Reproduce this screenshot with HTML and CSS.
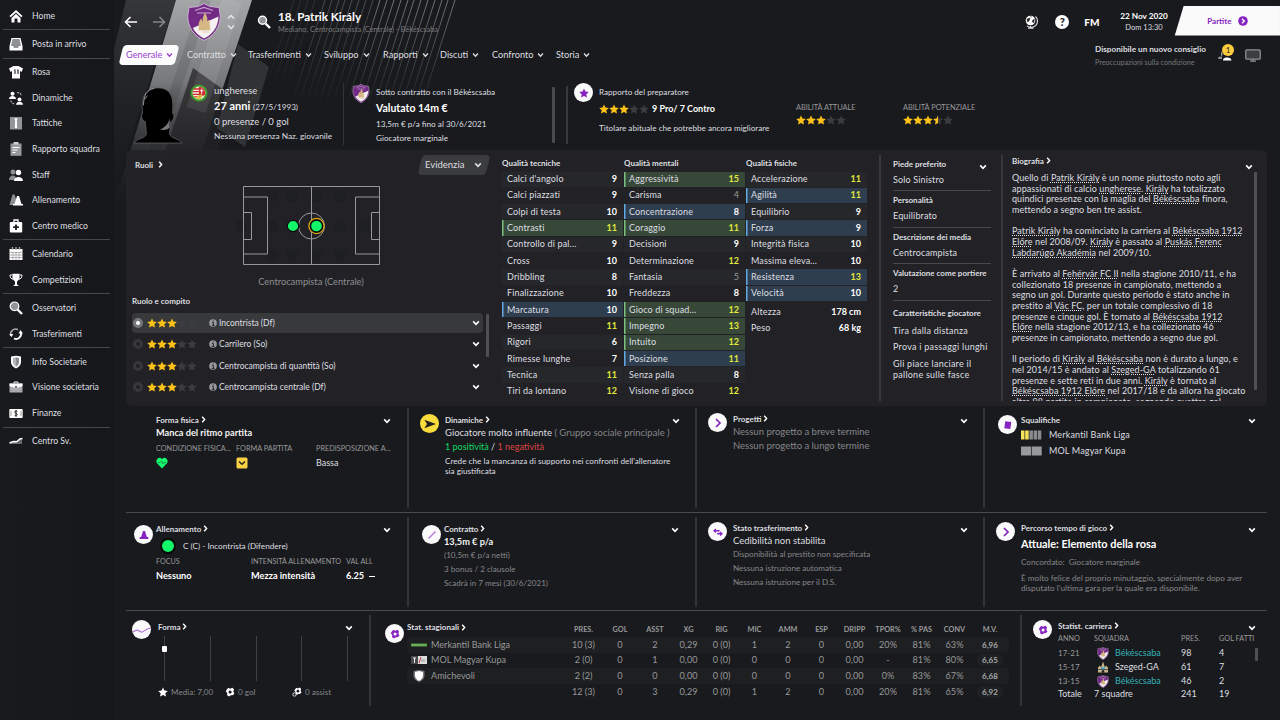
FILE: index.html
```html
<!DOCTYPE html>
<html lang="it">
<head>
    <meta charset="utf-8">
    <title>Patrik Király</title>
    <link rel="stylesheet" href="styles.css">
</head>
<body>
<svg class="defs" width="0" height="0">
    <defs>
        <linearGradient id="band" x1="0" y1="0" x2="0" y2="1"><stop offset="0" stop-color="#a5a6a8"/><stop offset=".4" stop-color="#77787a"/><stop offset="1" stop-color="#222326" stop-opacity="0"/></linearGradient>
        <linearGradient id="dimband" x1="0" y1="0" x2="0" y2="1"><stop offset="0" stop-color="#36373a"/><stop offset="1" stop-color="#222326" stop-opacity="0"/></linearGradient>
        <linearGradient id="ray" gradientUnits="userSpaceOnUse" x1="0" y1="0" x2="0" y2="110"><stop offset="0" stop-color="#77787a"/><stop offset="1" stop-color="#77787a" stop-opacity="0"/></linearGradient>
    </defs>
    <symbol id="chev" viewBox="0 0 8 6"><path d="M1.2 1.4 4 4.3 6.8 1.4" fill="none" stroke="currentColor" stroke-width="1.6"/></symbol>
    <symbol id="next" viewBox="0 0 5 8"><path d="M1 .9 3.8 4 1 7.1" fill="none" stroke="currentColor" stroke-width="1.6"/></symbol>
    <symbol id="star" viewBox="0 0 10 10"><path d="M5 .4 6.4 3.5 9.8 3.9 7.3 6.2 8 9.6 5 7.9 2 9.6 2.7 6.2.2 3.9 3.6 3.5z" fill="currentColor"/></symbol>
    <symbol id="stars3" viewBox="0 0 50 10">
        <g color="#fcc218"><use href="#star" width="10" height="10"/><use href="#star" x="10" width="10" height="10"/><use href="#star" x="20" width="10" height="10"/></g>
        <g color="#3b3c3f"><use href="#star" x="30" width="10" height="10"/><use href="#star" x="40" width="10" height="10"/></g>
    </symbol>
    <symbol id="stars35" viewBox="0 0 50 10">
        <use href="#stars3" width="50" height="10"/>
        <path d="M35 .4 33.6 3.5 30.2 3.9 32.7 6.2 32 9.6 35 7.9z" fill="#fcc218"/>
    </symbol>
    <symbol id="crest" viewBox="0 0 34 38">
        <path d="M17 .5 23 3.5 32 4.5 33.3 13C33.3 24 27 33 17 37.5 7 33 .7 24 .7 13L2 4.5 11 3.5z" fill="#722a85" stroke="#c9b3cf" stroke-width="1"/>
        <path d="M31.5 13.5C31 24 26 31 17 35.5 11.500 32.500 8 29 5.800 25z" fill="#f5f1f2"/>
        <path d="M8 7.500 17 4.500 26 7.500M10 10h14" stroke="#c7a5ce" fill="none" stroke-width="1.200"/>
        <path d="M12 27v-7l2-4 2 4v-5l2-5 2 5v5l2-3 1 10zM15 29h7" fill="#d6b884" stroke="#d6b884" stroke-width=".6"/>
    </symbol>
    <symbol id="ball" viewBox="0 0 12 12"><path d="M4 1 6 2 9 .8 10.800 3 10 5.500 11.300 8 9 10 6.800 9.800 5 11.300 2.500 10 2.700 7.300.9 5 2.400 2.700z" fill="currentColor"/><circle cx="6.100" cy="6" r="1.900" fill="var(--hole, #191a1d)"/></symbol>
    <symbol id="info" viewBox="0 0 10 10"><circle cx="5" cy="5" r="4.800" fill="#98999b"/><path d="M3.800 4.400H5.500V8M3.500 8h3.500M5.200 1.700v1.500" stroke="#242528" stroke-width="1.200" fill="none"/></symbol>
</svg>

<nav class="sidebar">
    <div class="group">
        <a><svg viewBox="0 0 14 14"><path d="M7 1 13.500 7 12.300 8.300 7 3.400 1.700 8.300.5 7zM7 4.700 11.500 9v4.500H8.500V9.500h-3v4h-3V9z" fill="#fff"/></svg>Home</a>
    </div>
    <div class="group">
        <a><svg viewBox="0 0 14 14"><path d="M2.500 1h9L13.500 9v4.500H.5V9z" fill="#fff"/><path d="M3.500 2h7L12 9H10L9 11H5L4 9H2z" fill="#8f9093"/></svg>Posta in arrivo</a>
    </div>
    <div class="group">
        <a><svg viewBox="0 0 14 14"><path d="M4.500 1h5L14 3.500 12.500 7 11 6v7.500H3V6L1.500 7 0 3.500z" fill="#fff"/><path d="M5 5h1v4M8 5h1v4" stroke="#333" stroke-width="1.200" fill="none"/></svg>Rosa</a>
        <a><svg viewBox="0 0 14 14"><circle cx="3.500" cy="2.800" r="2" fill="#fff"/><path d="M0 8c0-4 7-4 7 0z" fill="#fff"/><circle cx="10.500" cy="8.500" r="2" fill="#fff"/><path d="M7 13.700c0-4 7-4 7 0z" fill="#fff"/><path d="M8 1.500C11 1.500 12 3 12.300 5M1.800 9.500C2 11 3.500 13 6 13" fill="none" stroke="#aaa" stroke-width="1.200" stroke-dasharray="2 1"/></svg>Dinamiche</a>
        <a><svg viewBox="0 0 14 14"><path d="M1 1h12v12.500H1z" fill="#939496"/><circle cx="7" cy="3.500" r="1.400" fill="#fff"/><path d="M7 5v5" stroke="#fff" stroke-width="2"/><circle cx="7" cy="11" r="1.300" fill="#fff"/></svg>Tattiche</a>
        <a><svg viewBox="0 0 14 14"><path d="M1.500 1.500h11v12.300h-11z" fill="#98999b"/><path d="M4.500 0h5v2.500h-5z" fill="#ccc"/><path d="M3.500 5.500h7M3.500 8h5M3.500 10.500h3" stroke="#fff"/></svg>Rapporto squadra</a>
        <a><svg viewBox="0 0 14 14"><g fill="#8d8e90"><circle cx="4" cy="4" r="2.500"/><path d="M0 12c0-5 6-6 7-2v2z"/></g><circle cx="9.500" cy="4.500" r="2.700" fill="#fff"/><path d="M5 13c0-5.500 9-5.500 9 0z" fill="#fff"/></svg>Staff</a>
        <a><svg viewBox="0 0 14 14"><path d="M3.500 1.500h2L8 9v3H.5z" fill="#8d8e90"/><path d="M8 3h2l2.500 8H14v1.500H4V11h1.500z" fill="#fff"/></svg>Allenamento</a>
        <a><svg viewBox="0 0 14 14"><path d="M5 3V1h4v2" fill="none" stroke="#fff" stroke-width="1.300"/><rect x=".8" y="3" width="12.400" height="10.500" rx="1" fill="#fff"/><path d="M7 5.500v5.500M4.200 8.200h5.600" stroke="#191a1d" stroke-width="1.800"/></svg>Centro medico</a>
    </div>
    <div class="group">
        <a><svg viewBox="0 0 14 14"><path d="M.5 2h13v11H.5z" fill="#fff"/><path d="M3.500 0v3M7 0v3M10.500 0v3" stroke="#aaa" stroke-width="1.300"/><path d="M1 5.500h12M1 8h12M1 10.500h12M4 5v8M7 5v8M10 5v8" stroke="#999" stroke-width=".7"/></svg>Calendario</a>
        <a><svg viewBox="0 0 14 14"><path d="M3.500.8h7V6L8 8.500v3l2 1.500H4l2-1.500v-3L3.500 6z" fill="#fff"/><path d="M3.500 2H1c0 3 1.500 4 3 4M10.500 2H13c0 3-1.500 4-3 4" fill="none" stroke="#fff"/></svg>Competizioni</a>
    </div>
    <div class="group">
        <a><svg viewBox="0 0 14 14"><path d="m8.500 8.500 4.500 4.500" stroke="#fff" stroke-width="2.400"/><circle cx="5.500" cy="5.300" r="4.300" fill="#939496" stroke="#fff" stroke-width="1.200"/></svg>Osservatori</a>
        <a><svg viewBox="0 0 14 14"><path d="M2 9A5 5 0 0 1 9 2.700" fill="none" stroke="#aaa" stroke-width="1.600"/><path d="M5 11.500A5 5 0 0 0 12 6" fill="none" stroke="#fff" stroke-width="1.800"/><path d="M.3 7h4L2.500 10zM9.500 6.500h4.500L11.500 3z" fill="#fff"/></svg>Trasferimenti</a>
    </div>
    <div class="group">
        <a><svg viewBox="0 0 14 14"><path d="M2 1.500 7 .8l5 .7V7c0 3.500-3 5.500-5 6.500C5 12.500 2 10.500 2 7z" fill="#fff"/><path d="M7 2.300 10 3v4c0 2.500-1.800 4-3 4.800z" fill="#8d8e90"/><path d="M7 2.300 4 3v4c0 2.500 1.800 4 3 4.800z" fill="#b5b6b8"/></svg>Info Societarie</a>
        <a><svg viewBox="0 0 14 14"><path d="M5 3.500V2h4v1.500" fill="none" stroke="#fff"/><path d="M.5 3.500h13V12.500H.5z" fill="#a9aaac"/><path d="M.5 3.500h13V6L7 8.500.5 6z" fill="#fff"/><circle cx="7" cy="7" r="1.300" fill="#777"/></svg>Visione societaria</a>
        <a><svg viewBox="0 0 14 14"><rect x=".3" y="3" width="13.400" height="9" rx="1" fill="#fff"/><path d="M8.300 5.300c-3-1-3.300 1.500-1.300 2s1.500 3-1.300 2M7 4v7" stroke="#222" fill="none"/><path d="M2 5v5M12 5v5" stroke="#999"/></svg>Finanze</a>
    </div>
    <div class="group last">
        <a><svg viewBox="0 0 14 14"><path d="m1 9 4-1 3-1 5-2v5H1z" fill="#66676a"/><path d="m.5 9 4-1.500 3 .2L11 5l2.500-.5" stroke="#fff" fill="none" stroke-width="1.400"/></svg>Centro Sv.</a>
    </div>
</nav>

<main>
    <svg class="backdrop" width="480" height="230" viewBox="0 0 480 230">
        <path d="M12 0H62L0 190V50z" fill="url(#dimband)"/>
        <path d="M62 0H138L70 205H0z" fill="url(#band)"/>
        <path d="M79 68 121 98 78 230H25z" fill="#222326" opacity=".72"/>
        <path d="M124 44 155 67 131 147 103 128z" fill="#37383b" opacity=".8"/>
        <path d="M92 0 34 170" stroke="#191a1d" stroke-width="10" opacity=".12"/>
        <path d="M118 0 82 110" stroke="#fff" stroke-width="20" opacity=".08"/>
        <g stroke="url(#ray)" stroke-width="1">
            <path d="m180 0-26 80M187 0l-26 80M194 0l-26 80M201 0l-28 85" opacity=".25"/>
            <path d="m211 0-32 100M218 0l-32 100M225 0l-32 100M231 0l-32 100M238 0l-32 100M245 0l-32 100M252 0l-32 100M259 0l-32 100" opacity=".55"/>
            <path d="m266 0-35 110M273 0l-35 110M280 0l-35 110M287 0l-35 110M294 0l-35 110M300 0l-35 110M307 0l-35 110M314 0l-35 110M321 0l-35 110M328 0l-35 110M334 0l-35 110M341 0l-35 110" opacity=".95"/>
        </g>
    </svg>

    <header class="topbar">
        <svg class="arrow" viewBox="0 0 14 12"><path d="M6.500 1 1.500 6l5 5M1.500 6H13" fill="none" stroke="#fff" stroke-width="1.600"/></svg>
        <svg class="arrow fwd" viewBox="0 0 14 12"><path d="m7.500 1 5 5-5 5M12.500 6H1" fill="none" stroke="#85868a" stroke-width="1.600"/></svg>
        <svg class="crest"><use href="#crest"/></svg>
        <svg class="updown" viewBox="0 0 8 16"><path d="m1 4.500 3-3 3 3M1 11.500l3 3 3-3" fill="none" stroke="#e8e8e8" stroke-width="1.500"/></svg>
        <svg class="search" viewBox="0 0 14 14"><path d="m8.500 8.500 4.500 4.500" stroke="#fff" stroke-width="2.400"/><circle cx="5.500" cy="5.300" r="4" fill="#939496" stroke="#fff" stroke-width="1.400"/></svg>
        <div class="who">
            <h1>18. Patrik Király</h1>
            <p>Mediano, Centrocampista (Centrale) - Békéscsaba</p>
        </div>
        <svg class="world" viewBox="0 0 14 14"><circle cx="6.500" cy="5.500" r="4.800" fill="#fff"/><path d="M3 4 6 3 5 6 3.500 7zM8 6l2.500-2-1 4zM6 1.500 8 2" fill="#222" stroke="#222" stroke-width=".5"/><path d="M11.500 1.500A6.300 6.300 0 0 1 3 10.800M6.500 11v2M4 13.300h5.500" fill="none" stroke="#ddd" stroke-width="1.100"/></svg>
        <span class="help">?</span>
        <b class="fm">FM</b>
        <div class="date"><b>22 Nov 2020</b><span>Dom 13:30</span></div>
        <button class="play">Partite <svg viewBox="0 0 10 10"><circle cx="5" cy="5" r="4.800" fill="#8723c0"/><path d="m4 2.700 2.300 2.300L4 7.300" fill="none" stroke="#fff" stroke-width="1.400"/></svg></button>
    </header>

    <div class="tabs">
        <span class="tab on"><i>Generale</i><svg><use href="#chev"/></svg></span>
        <span class="tab"><i>Contratto</i><svg><use href="#chev"/></svg></span>
        <span class="tab"><i>Trasferimenti</i><svg><use href="#chev"/></svg></span>
        <span class="tab"><i>Sviluppo</i><svg><use href="#chev"/></svg></span>
        <span class="tab"><i>Rapporti</i><svg><use href="#chev"/></svg></span>
        <span class="tab"><i>Discuti</i><svg><use href="#chev"/></svg></span>
        <span class="tab"><i>Confronto</i><svg><use href="#chev"/></svg></span>
        <span class="tab"><i>Storia</i><svg><use href="#chev"/></svg></span>
        <div class="advice">
            <b>Disponibile un nuovo consiglio</b>
            <span>Preoccupazioni sulla condizione</span>
        </div>
        <div class="assist">
            <svg viewBox="0 0 14 12"><path d="M0 10c0-3 3-3 4-2v2zM3 2l2 3-2 3" fill="#8d8e90"/><path d="M5 11.500c0-3 3-3 4-3s4 0 4.500 3z" fill="#fff"/></svg>
            <span class="count">1</span>
        </div>
        <svg class="screen" viewBox="0 0 16 13"><rect x=".8" y=".8" width="14.400" height="9.400" rx="1" fill="#3c3d40" stroke="#8f9093" stroke-width="1.300"/><path d="M5 12.200h6M8 10v2" stroke="#8f9093" stroke-width="1.300"/></svg>
    </div>

    <section class="profile">
        <svg class="photo" viewBox="0 0 52 60">
            <path d="M1 59C5 54 13 54 14 50L13 37C9 36 8 30 10 28 8 10 14 2 26 2S43 10 41 28c3 2 1 8-2 9l-1 13c1 4 9 4 13 9z" fill="#000" stroke="#606164" stroke-width=".8"/>
            <path d="M38 33c-1 6-5 10-10 12 4 1 9 0 10-2z" fill="#77787a"/>
            <path d="M11 20C11 10 14 4 22 2.500M12 14l3-4" stroke="#a5a6a8" fill="none" stroke-width=".9"/>
        </svg>
        <svg class="flag" viewBox="0 0 20 20"><circle cx="10" cy="10" r="9.500" fill="#3d9b28"/><circle cx="10" cy="10" r="7.200" fill="#f4efe6"/><path d="M4 5.500h6M3 8.500h7M3.200 11.500H10M5 14h5" stroke="#d1262d" stroke-width="1.500"/><path d="M10 3a7 7 0 0 1 6.500 9.500L10 14z" fill="#d1262d"/><path d="M13 5v6M11 7.500h4" stroke="#fff"/><path d="M7 13.500 13 11l1 3-3 3-4-1z" fill="#d9b546"/></svg>
        <div class="nation">
            <p class="l1">ungherese</p>
            <p class="l2"><b>27 anni</b> <small>(27/5/1993)</small></p>
            <p class="l3">0 presenze / 0 gol</p>
            <p class="l4">Nessuna presenza Naz. giovanile</p>
        </div>
        <div class="deal">
            <svg class="minicrest"><use href="#crest"/></svg>
            <div>
                <p class="d1">Sotto contratto con il Békéscsaba</p>
                <p class="d2">Valutato 14m €</p>
                <p class="d3">13,5m € p/a fino al 30/6/2021</p>
                <p class="d4">Giocatore marginale</p>
            </div>
            <span class="bar"></span>
        </div>
        <div class="report">
            <span class="badge"><svg viewBox="0 0 10 10"><use href="#star"/></svg></span>
            <div class="coach">
                <p>Rapporto del preparatore</p>
                <div class="pros"><svg class="stars"><use href="#stars3"/></svg><b>9 Pro/ 7 Contro</b></div>
                <p>Titolare abituale che potrebbe ancora migliorare</p>
            </div>
            <div class="ability"><span>ABILITÀ ATTUALE</span><svg class="stars"><use href="#stars3"/></svg></div>
            <div class="ability"><span>ABILITÀ POTENZIALE</span><svg class="stars"><use href="#stars35"/></svg></div>
        </div>
    </section>

    <section class="panel">
        <div class="roles">
            <div class="roles-head">
                <h3>Ruoli <svg class="next"><use href="#next"/></svg></h3>
                <span class="select">Evidenzia <svg><use href="#chev"/></svg></span>
            </div>
            <svg class="pitch" viewBox="0 0 144 80">
                <g fill="#1e1f21"><circle cx="36" cy="11" r="6"/><circle cx="56" cy="11" r="6"/><circle cx="80" cy="11" r="6"/><circle cx="104" cy="11" r="6"/><circle cx="36" cy="41" r="6"/><circle cx="104" cy="41" r="6"/><circle cx="128" cy="41" r="6"/><circle cx="4" cy="41" r="6"/><circle cx="36" cy="70" r="6"/><circle cx="56" cy="70" r="6"/><circle cx="80" cy="70" r="6"/><circle cx="104" cy="70" r="6"/></g>
                <g fill="none" stroke="#97989a" stroke-width="1"><path d="M7.500 1.500h136v78H7.500zM75.500 1.500v78M7.500 12h24v57h-24M7.500 27.500h8v27h-8M143.500 12h-24v57h24M143.500 27.500h-8v27h8"/><circle cx="75.500" cy="41" r="13"/></g>
                <circle cx="57" cy="41" r="5.700" fill="#12f76a" stroke="#0c0d0e" stroke-width="1.200"/>
                <circle cx="80.500" cy="41" r="7.600" fill="#0c0d0e" stroke="#dfa814" stroke-width="1.300"/>
                <circle cx="80.500" cy="41" r="5.300" fill="#12f76a"/>
            </svg>
            <p class="position">Centrocampista (Centrale)</p>
            <h3 class="duty">Ruolo e compito</h3>
            <div class="rolelist">
                <div class="role on"><i class="radio"></i><svg class="stars"><use href="#stars3"/></svg><svg class="info"><use href="#info"/></svg><span>Incontrista (Df)</span><svg class="chev"><use href="#chev"/></svg></div>
                <div class="role"><i class="radio"></i><svg class="stars"><use href="#stars3"/></svg><svg class="info"><use href="#info"/></svg><span>Carrilero (So)</span><svg class="chev"><use href="#chev"/></svg></div>
                <div class="role"><i class="radio"></i><svg class="stars"><use href="#stars3"/></svg><svg class="info"><use href="#info"/></svg><span>Centrocampista di quantità (So)</span><svg class="chev"><use href="#chev"/></svg></div>
                <div class="role"><i class="radio"></i><svg class="stars"><use href="#stars3"/></svg><svg class="info"><use href="#info"/></svg><span>Centrocampista centrale (Df)</span><svg class="chev"><use href="#chev"/></svg></div>
                <span class="thumb"></span>
            </div>
        </div>

        <div class="attrs">
            <div class="attr-col">
                <h3>Qualità tecniche</h3>
                <div class="attr"><span>Calci d'angolo</span><b>9</b></div>
                <div class="attr"><span>Calci piazzati</span><b>9</b></div>
                <div class="attr"><span>Colpi di testa</span><b>10</b></div>
                <div class="attr key"><span>Contrasti</span><b class="hi">11</b></div>
                <div class="attr"><span>Controllo di pal...</span><b>9</b></div>
                <div class="attr"><span>Cross</span><b>10</b></div>
                <div class="attr"><span>Dribbling</span><b>8</b></div>
                <div class="attr"><span>Finalizzazione</span><b>10</b></div>
                <div class="attr pref"><span>Marcatura</span><b>10</b></div>
                <div class="attr"><span>Passaggi</span><b class="hi">11</b></div>
                <div class="attr"><span>Rigori</span><b>6</b></div>
                <div class="attr"><span>Rimesse lunghe</span><b>7</b></div>
                <div class="attr"><span>Tecnica</span><b class="hi">11</b></div>
                <div class="attr"><span>Tiri da lontano</span><b class="hi">12</b></div>
            </div>
            <div class="attr-col">
                <h3>Qualità mentali</h3>
                <div class="attr key"><span>Aggressività</span><b class="hi">15</b></div>
                <div class="attr"><span>Carisma</span><b class="lo">4</b></div>
                <div class="attr pref"><span>Concentrazione</span><b>8</b></div>
                <div class="attr key"><span>Coraggio</span><b class="hi">11</b></div>
                <div class="attr"><span>Decisioni</span><b>9</b></div>
                <div class="attr"><span>Determinazione</span><b class="hi">12</b></div>
                <div class="attr"><span>Fantasia</span><b class="lo">5</b></div>
                <div class="attr"><span>Freddezza</span><b>8</b></div>
                <div class="attr key"><span>Gioco di squad...</span><b class="hi">12</b></div>
                <div class="attr key"><span>Impegno</span><b class="hi">13</b></div>
                <div class="attr key"><span>Intuito</span><b class="hi">12</b></div>
                <div class="attr pref"><span>Posizione</span><b class="hi">11</b></div>
                <div class="attr"><span>Senza palla</span><b>8</b></div>
                <div class="attr"><span>Visione di gioco</span><b class="hi">12</b></div>
            </div>
            <div class="attr-col">
                <h3>Qualità fisiche</h3>
                <div class="attr"><span>Accelerazione</span><b class="hi">11</b></div>
                <div class="attr pref"><span>Agilità</span><b class="hi">11</b></div>
                <div class="attr"><span>Equilibrio</span><b>9</b></div>
                <div class="attr pref"><span>Forza</span><b>9</b></div>
                <div class="attr"><span>Integrità fisica</span><b>10</b></div>
                <div class="attr"><span>Massima eleva...</span><b>10</b></div>
                <div class="attr pref"><span>Resistenza</span><b class="hi">13</b></div>
                <div class="attr pref"><span>Velocità</span><b>10</b></div>
                <div class="attr body"><span>Altezza</span><b>178 cm</b></div>
                <div class="attr body"><span>Peso</span><b>68 kg</b></div>
            </div>
        </div>

        <div class="traits">
            <svg class="chev"><use href="#chev"/></svg>
            <div class="trait"><h3>Piede preferito</h3><p>Solo Sinistro</p></div>
            <div class="trait"><h3>Personalità</h3><p>Equilibrato</p></div>
            <div class="trait"><h3>Descrizione dei media</h3><p>Centrocampista</p></div>
            <div class="trait"><h3>Valutazione come portiere</h3><p>2</p></div>
            <h3 class="moves">Caratteristiche giocatore</h3>
            <p class="move">Tira dalla distanza</p>
            <p class="move">Prova i passaggi lunghi</p>
            <p class="move">Gli piace lanciare il<br>pallone sulle fasce</p>
        </div>

        <div class="bio">
            <h3>Biografia <svg class="next"><use href="#next"/></svg></h3>
            <svg class="chev"><use href="#chev"/></svg>
            <div class="bio-text">
                <p>Quello di <u>Patrik Király</u> è un nome piuttosto noto agli<br>appassionati di calcio <u>ungherese</u>. <u>Király</u> ha totalizzato<br>quindici presenze con la maglia del <u>Békéscsaba</u> finora,<br>mettendo a segno ben tre assist.</p>
                <p><u>Patrik Király</u> ha cominciato la carriera al <u>Békéscsaba 1912<br>Előre</u> nel 2008/09. <u>Király</u> è passato al <u>Puskás Ferenc<br>Labdarúgó Akadémia</u> nel 2009/10.</p>
                <p>È arrivato al <u>Fehérvár FC II</u> nella stagione 2010/11, e ha<br>collezionato 18 presenze in campionato, mettendo a<br>segno un gol. Durante questo periodo è stato anche in<br>prestito al <u>Vác FC</u>, per un totale complessivo di 18<br>presenze e cinque gol. È tornato al <u>Békéscsaba 1912<br>Előre</u> nella stagione 2012/13, e ha collezionato 46<br>presenze in campionato, mettendo a segno due gol.</p>
                <p>Il periodo di <u>Király</u> al <u>Békéscsaba</u> non è durato a lungo, e<br>nel 2014/15 è andato al <u>Szeged-GA</u> totalizzando 61<br>presenze e sette reti in due anni. <u>Király</u> è tornato al<br><u>Békéscsaba 1912 Előre</u> nel 2017/18 e da allora ha giocato<br>altre 98 partite in campionato, segnando quattro gol.</p>
            </div>
            <span class="thumb"></span>
        </div>
    </section>

    <section class="cards">
        <div class="card fitness">
            <div class="card-body">
                <h3>Forma fisica <svg class="next"><use href="#next"/></svg><svg class="chev"><use href="#chev"/></svg></h3>
                <p class="strong">Manca del ritmo partita</p>
                <div class="trio">
                    <span>CONDIZIONE FISICA...</span><span>FORMA PARTITA</span><span>PREDISPOSIZIONE A...</span>
                    <svg viewBox="0 0 12 12"><path d="M6 11.500.8 6C-1 3 3-1.500 6 2c3-3.500 7 1 5.200 4z" fill="#14f86d"/><path d="M2 5.500h2L5.500 4 7 7l1.200-1.500H10" fill="none" stroke="#17914a"/></svg>
                    <svg viewBox="0 0 12 12"><rect x=".5" y=".5" width="11" height="11" rx="1.500" fill="#fbd144"/><path d="m3 4.500 3 2.800 3-2.800" fill="none" stroke="#222" stroke-width="1.500"/></svg>
                    <em>Bassa</em>
                </div>
            </div>
        </div>
        <div class="card">
            <span class="badge yellow"><svg viewBox="0 0 12 10"><path d="M.3.8 12 5 .3 9.200 3 5z" fill="#222"/></svg></span>
            <div class="card-body">
                <h3>Dinamiche <svg class="next"><use href="#next"/></svg><svg class="chev"><use href="#chev"/></svg></h3>
                <p class="normal">Giocatore molto influente <span class="dim">( Gruppo sociale principale )</span></p>
                <p class="mood"><span class="pos">1 positività</span> / <span class="neg">1 negatività</span></p>
                <p class="note">Crede che la mancanza di supporto nei confronti dell'allenatore<br>sia giustificata</p>
            </div>
        </div>
        <div class="card plans">
            <span class="badge"><svg viewBox="0 0 10 10"><path d="m3 1 4 4-4 4" fill="none" stroke="#8723c0" stroke-width="1.700"/></svg></span>
            <div class="card-body">
                <h3>Progetti <svg class="next"><use href="#next"/></svg><svg class="chev"><use href="#chev"/></svg></h3>
                <p class="normal dim">Nessun progetto a breve termine</p>
                <p class="normal dim gap">Nessun progetto a lungo termine</p>
            </div>
        </div>
        <div class="card bans">
            <span class="badge"><svg viewBox="0 0 10 10"><path d="m2.300 1.200 6 .8-1 7-6-.8z" fill="#8723c0"/></svg></span>
            <div class="card-body">
                <h3>Squalifiche <svg class="chev"><use href="#chev"/></svg></h3>
                <p class="ban"><svg viewBox="0 0 21 10"><path d="M0 .5h3.500v9H0zM4.200.5h3.500v9H4.200z" fill="#f5e25a"/><path d="M8.400.5h3.500v9H8.400zM12.600.5h3.500v9h-3.500zM16.800.5h3.500v9h-3.500z" fill="#8a8b8d"/></svg>Merkantil Bank Liga</p>
                <p class="ban"><svg viewBox="0 0 21 10"><path d="M0 .5h10v9H0zM10.700.5h10v9h-10z" fill="#98999b"/></svg>MOL Magyar Kupa</p>
            </div>
        </div>
    </section>

    <section class="cards second">
        <div class="card training">
            <span class="badge"><svg viewBox="0 0 10 10"><path d="M4 1h2l1.800 6H9.300v2H.7V7h1.500z" fill="#8723c0"/></svg></span>
            <div class="card-body">
                <h3>Allenamento <svg class="next"><use href="#next"/></svg><svg class="chev"><use href="#chev"/></svg></h3>
                <p class="train"><i class="dot"></i>C (C) - Incontrista (Difendere)</p>
                <div class="focus">
                    <span>FOCUS</span><span>INTENSITÀ ALLENAMENTO</span><span>VAL ALL</span>
                    <b>Nessuno</b><b>Mezza intensità</b><b>6.25 &nbsp;<i class="dash"></i></b>
                </div>
            </div>
        </div>
        <div class="card deal-card">
            <span class="badge"><svg viewBox="0 0 10 10"><path d="M1.500 8.500 8.500 1.500" stroke="#bd84dd" stroke-width="1.600"/></svg></span>
            <div class="card-body">
                <h3>Contratto <svg class="next"><use href="#next"/></svg><svg class="chev"><use href="#chev"/></svg></h3>
                <p class="strong">13,5m € p/a</p>
                <p class="small">(10,5m € p/a netti)</p>
                <p class="small">3 bonus / 2 clausole</p>
                <p class="small">Scadrà in 7 mesi (30/6/2021)</p>
            </div>
        </div>
        <div class="card plans">
            <span class="badge"><svg viewBox="0 0 12 10"><path d="M0 3.500 3.500.5V2.500H8v2H3.500v2zM12 7 8.500 4v2H5v2h3.500v2z" fill="#8723c0"/></svg></span>
            <div class="card-body">
                <h3>Stato trasferimento <svg class="next"><use href="#next"/></svg><svg class="chev"><use href="#chev"/></svg></h3>
                <p class="normal">Cedibilità non stabilita</p>
                <p class="small">Disponibilità al prestito non specificata</p>
                <p class="small">Nessuna istruzione automatica</p>
                <p class="small">Nessuna istruzione per il D.S.</p>
            </div>
        </div>
        <div class="card path">
            <span class="badge"><svg viewBox="0 0 10 10"><path d="m3 1 4 4-4 4" fill="none" stroke="#8723c0" stroke-width="1.700"/></svg></span>
            <div class="card-body">
                <h3>Percorso tempo di gioco <svg class="next"><use href="#next"/></svg><svg class="chev"><use href="#chev"/></svg></h3>
                <p class="big">Attuale: Elemento della rosa</p>
                <p class="small">Concordato: &nbsp;Giocatore marginale</p>
                <p class="note dim">È molto felice del proprio minutaggio, specialmente dopo aver<br>disputato l'ultima gara per la quale era disponibile.</p>
            </div>
        </div>
    </section>

    <section class="bottom">
        <div class="form">
            <div class="form-head">
                <span class="badge"><svg class="wave" viewBox="0 0 18 10"><path d="M0 7c4-3 5-2 8 0 3 1 4-4 10-4" fill="none" stroke="#b274d6" stroke-width="1.100"/></svg></span>
                <h3>Forma <svg class="next"><use href="#next"/></svg></h3>
                <svg class="chev"><use href="#chev"/></svg>
            </div>
            <div class="chart"><i><b></b></i><i></i><i></i><i></i><i></i></div>
            <div class="legend">
                <span><svg><use href="#star"/></svg>Media: 7,00</span>
                <span><svg><use href="#ball"/></svg>0 gol</span>
                <span><svg viewBox="0 0 12 12"><use href="#ball" x="2" width="10" height="10"/><circle cx="3" cy="9" r="2" fill="#191a1d" stroke="#fff"/></svg>0 assist</span>
            </div>
        </div>
        <div class="season">
            <span class="badge purple"><svg><use href="#ball"/></svg></span>
            <div class="table">
                <div class="row head"><span>Stat. stagionali <svg class="next"><use href="#next"/></svg></span><i>PRES.</i><i>GOL</i><i>ASST</i><i>XG</i><i>RIG</i><i>MIC</i><i>AMM</i><i>ESP</i><i>DRIPP</i><i>TPOR%</i><i>% PAS</i><i>CONV</i><i>M.V.</i></div>
                <div class="row"><span><svg viewBox="0 0 16 12"><path d="M0 4.500h16v3H0z" fill="#4f9c3c"/><path d="M1 6h14" stroke="#b9d9ae" stroke-width=".8" stroke-dasharray="1.500 .7"/></svg>Merkantil Bank Liga</span><i>10 (3)</i><i>0</i><i>2</i><i>0,29</i><i>0 (0)</i><i>1</i><i>2</i><i>0</i><i>0,00</i><i>20%</i><i>81%</i><i>63%</i><b>6,96</b></div>
                <div class="row"><span><svg viewBox="0 0 16 12"><path d="M0 2h16v8H0z" fill="#48494c"/><path d="M7 2h9v8H7z" fill="#ddd"/><path d="M2 4h3M3.500 4v5" stroke="#eee"/><path d="M8 9 10 3" stroke="#b44"/><path d="M11 5v3M13 5v3" stroke="#999"/></svg>MOL Magyar Kupa</span><i>2 (0)</i><i>0</i><i>1</i><i>0,00</i><i>0 (0)</i><i>0</i><i>0</i><i>0</i><i>0,00</i><i>-</i><i>81%</i><i>80%</i><b>6,65</b></div>
                <div class="row"><span><svg viewBox="0 0 16 12"><path d="M2.500 1 8 0l5.500 1v4c0 4-3 6-5.500 7-2.500-1-5.500-3-5.500-7z" fill="#77787a"/><path d="M4 2 8 1l4 1v3.500c0 2.500-2 4.500-4 5.500-2-1-4-3-4-5.500z" fill="#fff"/></svg>Amichevoli</span><i>2 (2)</i><i>0</i><i>0</i><i>0,00</i><i>0 (0)</i><i>0</i><i>0</i><i>0</i><i>0,00</i><i>0%</i><i>83%</i><i>67%</i><b>6,68</b></div>
                <div class="row"><span></span><i>12 (3)</i><i>0</i><i>3</i><i>0,29</i><i>0 (0)</i><i>1</i><i>2</i><i>0</i><i>0,00</i><i>20%</i><i>81%</i><i>65%</i><b>6,92</b></div>
            </div>
        </div>
        <div class="career">
            <span class="badge purple"><svg><use href="#ball"/></svg></span>
            <div class="history">
                <h3>Statist. carriera <svg class="next"><use href="#next"/></svg><svg class="chev"><use href="#chev"/></svg></h3>
                <div class="line head"><span>ANNO</span><span>SQUADRA</span><span>PRES.</span><span>GOL FATTI</span></div>
                <div class="line"><small>17-21</small><span class="club"><svg><use href="#crest"/></svg>Békéscsaba</span><span>98</span><span>4</span></div>
                <div class="line"><small>15-17</small><span><svg viewBox="0 0 12 12"><path d="M1 11V6l2-2 1 2 2-6 2 6 1-2 2 2v5z" fill="#c9b48a"/><path d="M4 6h4v2H4z" fill="#38a0cf"/><path d="M1 8h10M5 11V9h2v2" stroke="#444" stroke-width=".8"/></svg>Szeged-GA</span><span>61</span><span>7</span></div>
                <div class="line"><small>13-15</small><span class="club"><svg><use href="#crest"/></svg>Békéscsaba</span><span>46</span><span>2</span></div>
                <div class="line total"><span>Totale</span><span>7 squadre</span><span>241</span><span>19</span></div>
                <i class="thumb"></i>
            </div>
        </div>
    </section>
</main>
</body>
</html>
```

FILE: styles.css
```css
* {
    box-sizing: border-box;
}
body {
    margin: 0;
    width: 1280px;
    height: 720px;
    overflow: hidden;
    display: flex;
    background: #191a1d;
    color: #dedfe0;
    font: 9px/12px Lato, "Liberation Sans", sans-serif;
    white-space: nowrap;
}
h1, h3, p {
    margin: 0;
}
h3 {
    font-size: 8px;
    line-height: 12px;
    font-weight: bold;
}
i, em {
    font-style: normal;
}
svg {
    flex: none;
    display: block;
}
.defs {
    position: absolute;
}

/* sidebar */
.sidebar {
    width: 114px;
    flex: none;
    padding: 2px 4px 0 3px;
    background: linear-gradient(90deg, #191a1d, #16171a);
}
.group {
    padding: .9px 0 .8px;
    border-bottom: 1px solid #46474a;
}
.group.last {
    border: 0;
}
.group a {
    height: 25.6px;
    display: flex;
    align-items: center;
    padding-left: 6px;
    font-size: 8.700px;
}
.group svg {
    width: 14px;
    height: 14px;
    margin-right: 9px;
}

main {
    position: relative;
    width: 1166px;
    height: 720px;
}
.backdrop {
    position: absolute;
    left: 0;
    top: 0;
}
.topbar, .tabs, .profile, .panel, .cards, .bottom {
    position: relative;
}

/* top bar */
.topbar {
    height: 43px;
    display: flex;
    align-items: center;
}
.arrow {
    width: 14px;
    height: 12px;
    margin-left: 10px;
}
.arrow.fwd {
    margin-left: 14px;
}
.topbar .crest {
    width: 34px;
    height: 38px;
    margin-left: 21px;
}
.updown {
    width: 8px;
    height: 16px;
    margin-left: 6px;
}
.search {
    width: 14px;
    height: 14px;
    margin-left: 22px;
}
.who {
    width: 752px;
    margin-left: 7px;
}
.who h1 {
    font-size: 11.700px;
    line-height: 14px;
    margin-top: 1px;
    color: #fff;
}
.who p {
    margin-top: 1px;
    font-size: 7.400px;
    line-height: 12px;
    color: #77787a;
}
.world {
    width: 14px;
    height: 14px;
}
.help {
    width: 14px;
    height: 14px;
    margin-left: 17px;
    border-radius: 50%;
    background: #fff;
    color: #191a1d;
    text-align: center;
    font-size: 11px;
    font-weight: 900;
    line-height: 14px;
}
.fm {
    margin-left: 15px;
    width: 16px;
    font-size: 10px;
    font-weight: 900;
    color: #fff;
}
.date {
    width: 64px;
    margin-left: 12px;
    text-align: center;
}
.date b, .date span {
    display: block;
}
.date b {
    color: #fff;
    font-size: 8.200px;
}
.date span {
    font-size: 7.500px;
}
.play {
    width: 106px;
    height: 30px;
    margin: -2px 0 0 -1px;
    border: 0;
    padding: 0;
    display: flex;
    align-items: center;
    justify-content: center;
    gap: 6px;
    background: #fafafa;
    clip-path: polygon(9px 0, 100% 0, 100% 100%, 0 100%);
    color: #8723c0;
    font: bold 8px Lato, sans-serif;
}
.play svg {
    width: 10px;
    height: 10px;
}

/* tabs */
.tabs {
    height: 35px;
    display: grid;
    grid-template-columns: 68px 61px 76px 59px 57px 52px 64px 539px 120px 30px 18px;
    padding-left: 5px;
}
.tab {
    position: relative;
    z-index: 0;
    height: 20px;
    margin-top: 2px;
    display: flex;
    align-items: center;
    gap: 4px;
    font-size: 9.200px;
}
.tab svg {
    width: 7px;
    height: 6px;
}
.tab.on {
    width: 60px;
    padding-left: 7px;
    color: #9a3fce;
}
.tab.on::before {
    content: "";
    position: absolute;
    inset: 0 2px;
    z-index: -1;
    background: #fcfcfc;
    border-radius: 4px;
    transform: skewX(-14deg);
}
.advice b, .advice span {
    display: block;
    line-height: 13px;
    font-size: 8.200px;
}
.advice span {
    font-size: 7.200px;
    color: #77787a;
}
.assist {
    position: relative;
    padding: 6px 0 0 3px;
}
.assist svg {
    width: 14px;
    height: 12px;
}
.count {
    position: absolute;
    left: 7px;
    top: 1px;
    width: 12px;
    height: 12px;
    border-radius: 50%;
    background: #fbcd3e;
    color: #222;
    font-size: 8px;
    text-align: center;
}
.screen {
    width: 16px;
    height: 13px;
    margin-top: 6px;
}

/* profile strip */
.profile {
    height: 72px;
    display: flex;
}
.photo {
    width: 52px;
    height: 58px;
    margin: 8px 0 0 18px;
}
.flag {
    width: 18px;
    height: 18px;
    margin: 6px 0 0 6px;
}
.nation {
    width: 129px;
    margin-left: 6px;
    padding-top: 5px;
}
.nation .l1 {
    font-size: 9.500px;
    line-height: 15px;
}
.nation .l2 {
    font-size: 11px;
    line-height: 16px;
    color: #fff;
}
.nation .l2 small {
    font-size: 8.200px;
    color: #dedfe0;
}
.nation .l3 {
    font-size: 9.500px;
    line-height: 14px;
}
.nation .l4 {
    font-size: 8.300px;
    line-height: 14px;
}
.deal {
    width: 223px;
    height: 62px;
    margin-top: 5px;
    border-left: 1px solid #333437;
    display: flex;
    padding-left: 8px;
}
.minicrest {
    width: 18px;
    height: 19px;
    margin: 1px 6px 0 0;
}
.deal p {
    font-size: 8.200px;
}
.deal div {
    width: 176px;
    padding-top: 1px;
}
.deal .d1 {
    line-height: 17px;
}
.deal .d2 {
    font-size: 10.500px;
    font-weight: bold;
    line-height: 15px;
    color: #fff;
}
.deal .d3 {
    line-height: 16px;
}
.deal .d4 {
    line-height: 12px;
}
.bar {
    width: 3px;
    height: 56px;
    margin-top: 4px;
    border-radius: 1px;
    background: #4a4b4e;
}
.report {
    height: 58px;
    margin-top: 8px;
    border-left: 2px solid #38393c;
    display: flex;
    padding-left: 6px;
}
.badge {
    flex: none;
    width: 19px;
    height: 19px;
    border-radius: 50%;
    display: flex;
    align-items: center;
    justify-content: center;
    background: #fafafa;
    color: #8723c0;
}
.badge svg {
    width: 10px;
    height: 10px;
}
.badge.yellow {
    background: #fadc3c;
}
.badge.yellow svg {
    width: 12px;
}
.badge.purple {
    --hole: #fafafa;
}
.badge .wave {
    width: 18px;
}
.report .badge {
    margin-top: -3px;
}
.coach {
    width: 197px;
    margin-left: 6px;
}
.coach p {
    font-size: 8.150px;
}
.pros {
    display: flex;
    align-items: center;
    gap: 3px;
    height: 22px;
    color: #fff;
}
.pros b {
    font-size: 9px;
}
.coach .pros + p {
    margin-top: 2px;
}
.stars {
    width: 50px;
    height: 10px;
}
.ability {
    width: 107px;
    padding-top: 16px;
    font-size: 7.400px;
    color: #98999b;
}
.ability .stars {
    margin-top: 1px;
}

/* main panel */
.panel {
    width: 1141px;
    height: 256px;
    margin-left: 12px;
    display: flex;
    background: rgba(35, 36, 39, .93);
    border-radius: 6px;
}
.chev {
    width: 8px;
    height: 6px;
    color: #fff;
}
.next {
    display: inline-block;
    width: 5px;
    height: 7px;
    color: #fff;
}
.roles {
    width: 364px;
    padding: 5px 0 0 6px;
}
.roles-head {
    display: flex;
    justify-content: space-between;
    padding-left: 3px;
    line-height: 20px;
}
.roles-head h3 {
    line-height: 20px;
}
.roles-head h3 svg {
    margin-left: 3px;
}
.select {
    position: relative;
    width: 72px;
    height: 20px;
    padding-left: 7px;
    display: flex;
    align-items: center;
    gap: 10px;
    font-size: 9.500px;
    z-index: 0;
}
.select::before {
    content: "";
    position: absolute;
    inset: 0 2px;
    z-index: -1;
    background: #3b3c3e;
    border-radius: 4px;
    transform: skewX(-14deg);
}
.select svg {
    width: 8px;
    height: 6px;
}
.pitch {
    width: 144px;
    height: 80px;
    margin: 10px 0 0 104px;
}
.position {
    margin-top: 11px;
    font-size: 9.300px;
    text-align: center;
    color: #8d8e90;
}
.duty {
    margin-top: 7px;
}
.rolelist {
    position: relative;
    width: 358px;
    margin-top: 6px;
}
.role {
    width: 351px;
    height: 20px;
    margin-bottom: 1.300px;
    padding: 0 3px 0 1px;
    border-radius: 4px;
    display: flex;
    align-items: center;
    font-size: 8.500px;
}
.role.on {
    background: #38393b;
}
.radio {
    width: 10px;
    height: 10px;
    border: 3px solid #37383b;
    border-radius: 50%;
}
.on .radio {
    background: #fff;
    border-color: #77787a;
}
.role .stars {
    margin-left: 4px;
}
.info {
    width: 8px;
    height: 8px;
    margin: 0 2px 0 12px;
}
.role .chev {
    margin-left: auto;
}
.thumb {
    position: absolute;
    width: 3px;
    border-radius: 1px;
    background: #4f5053;
}
.rolelist .thumb {
    right: 1px;
    top: 1px;
    height: 43px;
}
.attrs {
    display: flex;
    gap: 1px;
    margin-left: 12px;
    padding-top: 7px;
}
.attr-col {
    width: 121px;
}
.attr-col h3 {
    height: 14.500px;
}
.attr {
    height: 15.330px;
    margin-bottom: 1px;
    padding: 0 6px 0 5px;
    display: flex;
    align-items: center;
    justify-content: space-between;
    background: #26272a;
    font-size: 9px;
    letter-spacing: .15px;
}
.attr b {
    color: #fff;
    letter-spacing: 0;
}
.attr b.hi {
    color: #e0e83c;
}
.attr b.lo {
    color: #98999b;
    font-weight: normal;
}
.attr.key {
    background: #374839;
    box-shadow: inset 1.500px 0 #7cc07f;
}
.attr.pref {
    background: #2e3e4f;
    box-shadow: inset 1.500px 0 #63a9e3;
}
.attr:nth-child(odd):not(.key):not(.pref), .attr.body {
    background: none;
}
.attr.body {
    position: relative;
    top: 2px;
}
.traits {
    position: relative;
    width: 124px;
    height: 246px;
    margin: 5px 0 0 12px;
    padding: 0 10px 0 12px;
    border-left: 2px solid #38393c;
    border-right: 2px solid #38393c;
}
.traits .chev {
    position: absolute;
    left: 98px;
    top: 9px;
}
.trait {
    height: 36.400px;
    border-bottom: 1px solid #48494c;
}
.trait p {
    margin-top: 4px;
    letter-spacing: .15px;
}
.trait h3 {
    padding-top: 3px;
}
.moves {
    margin: 6px 0 4px;
}
.move {
    padding-top: 3px;
    margin-bottom: 3px;
    line-height: 10.700px;
    letter-spacing: .25px;
}
.bio {
    position: relative;
    width: 250px;
    margin-left: 9px;
    padding-top: 5px;
}
.bio .chev {
    position: absolute;
    left: 233px;
    top: 14px;
}
.bio-text {
    height: 234px;
    padding-top: 6px;
    overflow: hidden;
    font-size: 9px;
    line-height: 10.670px;
    letter-spacing: .08px;
}
.bio-text p {
    margin-bottom: 10.670px;
}
.bio u {
    text-decoration: underline dotted 1px;
    text-underline-offset: 1px;
}
.bio .thumb {
    left: 242px;
    top: 22px;
    height: 218px;
}

/* cards */
.cards {
    width: 1141px;
    height: 107px;
    margin-left: 12px;
    display: grid;
    grid-template-columns: 283px 288px 288px 282px;
    border-bottom: 1px solid #48494c;
}
.cards.second {
    height: 98px;
}
.card {
    height: 100px;
    margin-top: 2px;
    padding: 6px 0 0 11px;
    border-right: 2px solid #333437;
    display: flex;
}
.second .card {
    height: 90px;
    margin-top: 4px;
    padding-top: 6px;
}
.card:last-child {
    border: 0;
}
.card .badge {
    margin-right: 6px;
}
.card.fitness {
    padding-left: 30px;
}
.second .training {
    padding-left: 8px;
}
.training .badge, .deal-card .badge {
    margin: 2px 3px 0 0;
}
.deal-card {
    padding-left: 13px;
}
.plans .badge, .path .badge {
    margin-top: -1px;
}
.plans {
    padding-left: 11px;
}
.plans h3, .path h3 {
    margin-top: -1px;
}
.bans {
    padding-left: 13px;
}
.bans .badge {
    margin: 1px 4px 0 0;
}
.card-body {
    position: relative;
    width: 236px;
}
.card h3 .chev, .history .chev {
    position: absolute;
    left: 227px;
    top: 4px;
}
.strong {
    font-size: 9.200px;
    font-weight: bold;
    line-height: 13px;
    color: #f4f4f4;
}
.normal {
    font-size: 9.500px;
    line-height: 13px;
}
.dim {
    color: #85868a;
}
.gap {
    margin-top: 1px;
}
.trio {
    display: grid;
    grid-template-columns: 80px 80px 80px;
    margin-top: 4px;
    row-gap: 2px;
    font-size: 7.300px;
    color: #98999b;
}
.trio svg {
    width: 12px;
    height: 12px;
}
.trio em {
    font-size: 9px;
    color: #dedfe0;
}
.mood {
    margin-top: 2px;
}
.pos {
    color: #12d964;
}
.neg {
    color: #dc4444;
}
.note {
    margin-top: 4px;
    font-size: 8.200px;
    line-height: 9.500px;
}
.small {
    font-size: 8.100px;
    line-height: 14px;
    color: #85868a;
}
.ban {
    height: 16px;
    position: relative;
    top: 1px;
    display: flex;
    align-items: center;
    font-size: 9px;
    letter-spacing: .15px;
}
.ban svg {
    width: 21px;
    height: 10px;
    margin-right: 7px;
}
.train {
    display: flex;
    align-items: center;
    height: 21px;
    padding-left: 4px;
    font-size: 8.200px;
}
.dot {
    width: 16px;
    height: 16px;
    margin-right: 7px;
    border: 2px solid #08090a;
    border-radius: 50%;
    background: #12f76a;
}
.focus {
    display: grid;
    grid-template-columns: 95px 95px 50px;
    row-gap: 2px;
    font-size: 7.200px;
    color: #98999b;
}
.focus b {
    font-size: 9.200px;
    color: #fff;
}
.dash {
    display: inline-block;
    width: 6px;
    height: 1.500px;
    margin-bottom: 2px;
    background: #fff;
}
.big {
    margin-top: 2px;
    font-size: 10.900px;
    font-weight: bold;
    line-height: 16px;
    color: #fff;
}
.path .small {
    margin-top: 3px;
}
.path .note {
    margin-top: 5px;
}

/* bottom row */
.bottom {
    height: 109px;
    margin-left: 12px;
    display: flex;
}
.form {
    width: 245px;
    height: 91px;
    margin-top: 4px;
    border-right: 2px solid #333437;
}
.form-head {
    display: flex;
    padding: 5px 0 0 6px;
    height: 21px;
}
.form-head h3 {
    width: 187px;
    margin: 1px 0 0 7px;
}
.form-head .chev {
    margin-top: 5px;
}
.chart {
    width: 184px;
    height: 45px;
    margin-left: 38px;
    display: flex;
    justify-content: space-between;
}
.chart i {
    width: 1px;
    background: #3f4043;
}
.chart b {
    display: block;
    width: 5px;
    height: 6px;
    margin: 10px 0 0 -2px;
    border-radius: 1px;
    background: #fff;
}
.legend {
    display: grid;
    grid-template-columns: 67px 67px 60px;
    padding: 5px 0 0 32px;
    font-size: 8.100px;
    color: #85868a;
}
.legend span {
    display: flex;
    align-items: center;
}
.legend svg {
    width: 10px;
    height: 10px;
    margin-right: 3px;
    color: #fff;
}
.season {
    width: 651px;
    height: 91px;
    margin-top: 4px;
    padding: 9px 0 0 14px;
    display: flex;
    border-right: 2px solid #333437;
}
.season .badge {
    margin-right: 3px;
}
.table {
    margin-top: -5px;
}
.row {
    width: 602px;
    height: 15.600px;
    display: grid;
    grid-template-columns: 158px 37px 36px 34px 33px 33px 33px 34px 33px 33px 34px 33px 33px 38px;
    align-items: center;
    text-align: center;
    color: #98999b;
    font-size: 9.100px;
    border-radius: 4px;
}
.row:nth-child(even) {
    background: #1e1f21;
}
.row span {
    display: flex;
    align-items: center;
    text-align: left;
    padding-left: 4px;
}
.row span svg {
    width: 16px;
    height: 12px;
    margin-right: 4px;
}
.row b {
    font-size: 8px;
    border-radius: 5px;
    margin: 0 6px;
    background: #1f2022;
    color: #a9aaac;
}
.row.head {
    font-size: 7.300px;
    font-weight: bold;
    height: 16px;
    line-height: 16px;
}
.row.head span {
    color: #dedfe0;
    padding: 0 0 5px;
    font-size: 8px;
}
.row.head svg.next {
    width: 5px;
    height: 7px;
    margin-left: 2px;
}
.row:nth-child(2) {
    margin-top: 2px;
}
.career {
    display: flex;
    padding: 9px 0 0 11px;
}
.history {
    position: relative;
    width: 204px;
    margin-left: 6px;
}
.history .chev {
    left: 190px;
    top: 5px;
}
.line {
    display: grid;
    grid-template-columns: 36px 87px 38px 40px;
    height: 14px;
    align-items: center;
    font-size: 9px;
}
.line small {
    font-size: 8px;
    color: #98999b;
}
.line.head {
    font-size: 7.300px;
    color: #98999b;
}
.line span {
    display: flex;
    align-items: center;
}
.line svg {
    width: 12px;
    height: 13px;
    margin: 0 6px 0 3px;
}
.line .club {
    color: #35b0b8;
}
.line.total {
    height: 9px;
}
.history .thumb {
    left: 197px;
    top: 28px;
    height: 13px;
}
```
